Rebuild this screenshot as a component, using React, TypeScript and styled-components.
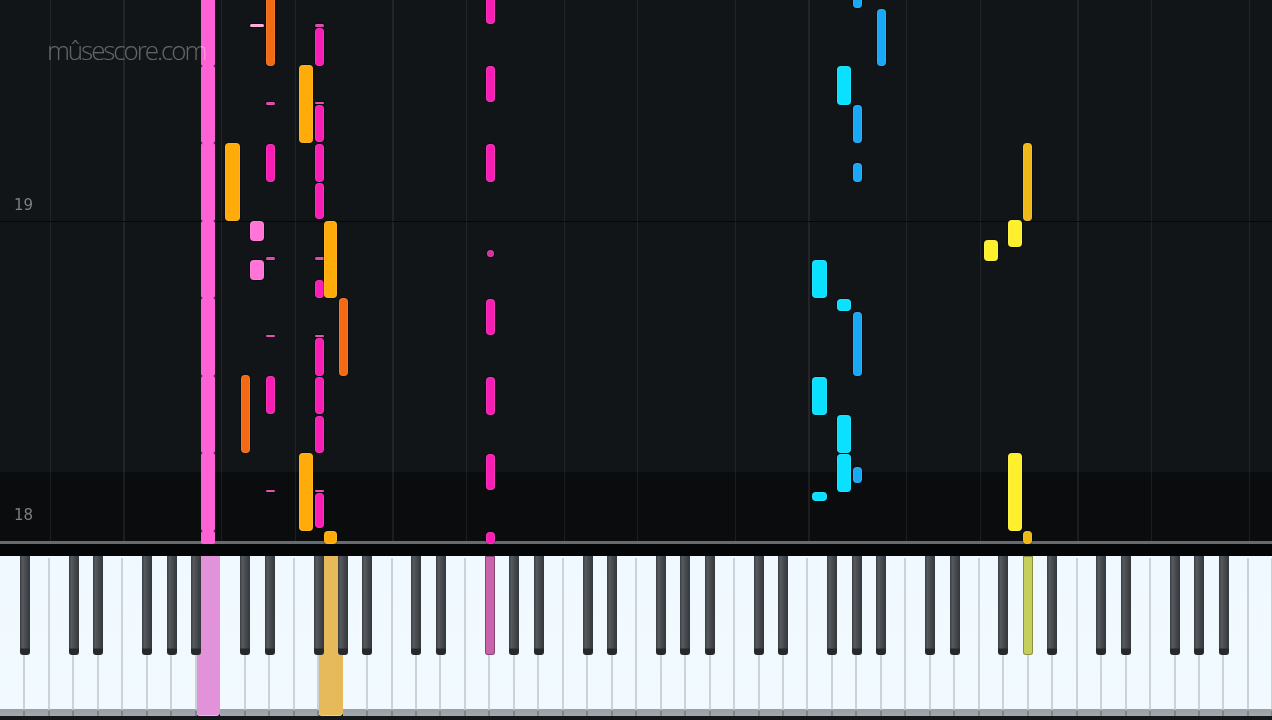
import React from 'react';
import styled, { createGlobalStyle } from 'styled-components';

const KEY_COUNT = 52;
const KEY_WIDTH = 1272 / KEY_COUNT;

const GlobalStyle = createGlobalStyle`
  html, body {
    margin: 0;
    padding: 0;
    background: #050607;
    overflow: hidden;
  }
`;

const Stage = styled.div`
  width: 1272px;
  height: 720px;
  display: flex;
  flex-direction: column;
  background: #050607;
  overflow: hidden;
  filter: blur(0.6px);
`;

// one octave of grid lines, then hit line, bar line, darker lower band
const Roll = styled.div`
  position: relative;
  flex: 0 0 544px;
  overflow: hidden;
  background:
    linear-gradient(#666b71, #666b71) 0 541px / 100% 3px no-repeat,
    linear-gradient(#06080a, #06080a) 0 221px / 100% 1px no-repeat,
    repeating-linear-gradient(
      to right,
      transparent 0,
      transparent 50px,
      rgba(255, 255, 255, 0.07) 50px,
      rgba(255, 255, 255, 0.07) 51.2px,
      transparent 51.2px,
      transparent 123.4px,
      rgba(255, 255, 255, 0.07) 123.4px,
      rgba(255, 255, 255, 0.07) 124.6px,
      transparent 124.6px,
      transparent 171.23px
    ),
    linear-gradient(to bottom, #111518 472px, #0a0c0d 472px);
`;

const Note = styled.div<{ $color: string; $flush?: boolean }>`
  position: absolute;
  box-sizing: border-box;
  border-radius: ${(p) => (p.$flush ? '2px' : '4px')};
  background: ${(p) => p.$color};
  box-shadow: ${(p) =>
    p.$flush ? 'none' : '0 0 0 1px rgba(0, 0, 0, 0.3), inset 0 0 0 1px rgba(255, 255, 255, 0.1)'};
`;

const MeasureNumber = styled.span`
  position: absolute;
  left: 14px;
  font-family: 'DejaVu Sans', sans-serif;
  font-size: 15px;
  line-height: 16px;
  color: #7c7f82;
`;

const Watermark = styled.span`
  position: absolute;
  left: 47px;
  top: 32px;
  font-family: 'Open Sans', sans-serif;
  font-weight: 300;
  font-size: 26px;
  line-height: 36px;
  letter-spacing: -2.1px;
  color: rgba(255, 255, 255, 0.34);
`;

const Gap = styled.div`
  flex: 0 0 12px;
  background: #040506;
`;

const Keyboard = styled.div`
  position: relative;
  flex: 0 0 160px;
  display: flex;
`;

const WhiteKey = styled.div<{ $active?: string }>`
  position: relative;
  flex: 1 1 0;
  box-sizing: border-box;
  background: linear-gradient(
    to bottom,
    ${(p) => p.$active ?? '#f0f9ff'} 0,
    ${(p) => p.$active ?? '#f2faff'} 153px,
    ${(p) => p.$active ?? '#9aa0a5'} 153px,
    ${(p) => p.$active ?? '#a2a8ad'} 160px
  );
  border-radius: ${(p) => (p.$active ? '0 0 4px 4px' : '0')};
  box-shadow: ${(p) => (p.$active ? 'inset 0 -1px 0 rgba(255, 255, 255, 0.35)' : 'none')};

  &::after {
    content: '';
    position: absolute;
    top: 2px;
    bottom: 0;
    right: -1px;
    width: 2px;
    background: ${(p) =>
      p.$active ? 'transparent' : 'linear-gradient(to bottom, #ccd2d6 151px, #7f858a 153px)'};
    z-index: 1;
  }
`;

const BlackKey = styled.div<{ $active?: string }>`
  position: absolute;
  top: 0;
  width: 10px;
  height: 99px;
  z-index: 2;
  box-sizing: border-box;
  border-radius: 0 0 3px 3px;
  background: ${(p) =>
    p.$active
      ? p.$active
      : 'linear-gradient(to bottom, transparent 92px, #26292b 93px), linear-gradient(to right, #3a3d40, #565a5e 25%, #45494d 60%, #34373a)'};
  box-shadow: ${(p) => (p.$active ? 'inset 0 0 0 1px rgba(0, 0, 0, 0.3)' : 'none')};
`;

const Floor = styled.div`
  flex: 0 0 4px;
  background: #15181a;
`;

const PINK = '#ff62d4';
const LIGHT = '#ff74d6';
const MAGENTA = '#f81db5';
const DASH = '#e040a8';
const AMBER = '#ffac0a';
const ORANGE = '#f26a14';
const BLUE = '#18a8f5';
const CYAN = '#0ae0ff';
const YELLOW = '#fff02e';
const GOLD = '#eeb818';

type NoteSpec = [left: number, width: number, top: number, bottom: number, color: string];

const NOTES: NoteSpec[] = [
  // long pink column, one note per beat
  [201, 14, -12, 66, PINK],
  [201, 14, 66, 143, PINK],
  [201, 14, 143, 221, PINK],
  [201, 14, 221, 298, PINK],
  [201, 14, 298, 376, PINK],
  [201, 14, 376, 453, PINK],
  [201, 14, 453, 531, PINK],
  [201, 14, 531, 550, PINK],

  [250, 14, 24, 27, '#ffa8dc'],
  [266, 9, -10, 66, ORANGE],
  [315, 9, 24, 27, DASH],
  [315, 9, 28, 66, MAGENTA],
  [266, 9, 102, 105, DASH],
  [315, 9, 102, 104, DASH],
  [315, 9, 105, 142, MAGENTA],
  [266, 9, 144, 182, MAGENTA],
  [315, 9, 144, 182, MAGENTA],
  [315, 9, 183, 219, MAGENTA],
  [250, 14, 221, 241, LIGHT],
  [250, 14, 260, 280, LIGHT],
  [266, 9, 257, 260, DASH],
  [315, 9, 257, 260, DASH],
  [315, 9, 280, 298, MAGENTA],
  [266, 9, 335, 337, DASH],
  [315, 9, 335, 337, DASH],
  [315, 9, 338, 376, MAGENTA],
  [266, 9, 376, 414, MAGENTA],
  [315, 9, 377, 414, MAGENTA],
  [315, 9, 416, 453, MAGENTA],
  [266, 9, 490, 492, DASH],
  [315, 9, 490, 492, DASH],
  [315, 9, 493, 528, MAGENTA],

  [299, 14, 65, 143, AMBER],
  [225, 15, 143, 221, AMBER],
  [324, 13, 221, 298, AMBER],
  [299, 14, 453, 531, AMBER],
  [324, 13, 531, 550, AMBER],
  [339, 9, 298, 376, ORANGE],
  [241, 9, 375, 453, ORANGE],

  // the repeating centre voice
  [486, 9, -10, 24, MAGENTA],
  [486, 9, 66, 102, MAGENTA],
  [486, 9, 144, 182, MAGENTA],
  [487, 7, 250, 257, '#d6309f'],
  [486, 9, 299, 335, MAGENTA],
  [486, 9, 377, 415, MAGENTA],
  [486, 9, 454, 490, MAGENTA],
  [486, 9, 532, 550, MAGENTA],

  [853, 9, -10, 8, BLUE],
  [877, 9, 9, 66, BLUE],
  [837, 14, 66, 105, CYAN],
  [853, 9, 105, 143, BLUE],
  [853, 9, 163, 182, BLUE],
  [812, 15, 260, 298, CYAN],
  [837, 14, 299, 311, CYAN],
  [853, 9, 312, 376, BLUE],
  [812, 15, 377, 415, CYAN],
  [837, 14, 415, 453, CYAN],
  [837, 14, 454, 492, CYAN],
  [853, 9, 467, 483, BLUE],
  [812, 15, 492, 501, CYAN],

  [1023, 9, 143, 221, GOLD],
  [1008, 14, 220, 247, YELLOW],
  [984, 14, 240, 261, YELLOW],
  [1008, 14, 453, 531, YELLOW],
  [1023, 9, 531, 550, GOLD],
];

const ACTIVE_WHITE: Record<number, string> = { 8: '#e292d8', 13: '#e6ba5a' };
const ACTIVE_BLACK: Record<number, string> = { 20: '#c862aa', 42: '#c6cf5c' };

// seams between B|C and E|F carry no black key
const hasBlackKey = (seam: number) => seam % 7 !== 2 && seam % 7 !== 5;
const seams = Array.from({ length: KEY_COUNT - 1 }, (_, i) => i + 1);

export default function App() {
  return (
    <>
      <GlobalStyle />
      <Stage>
        <Roll>
          <MeasureNumber style={{ top: 197 }}>19</MeasureNumber>
          <MeasureNumber style={{ top: 507 }}>18</MeasureNumber>
          {NOTES.map(([left, width, top, bottom, color], i) => (
            <Note
              key={i}
              $color={color}
              $flush={color === PINK}
              style={{ left, width, top, height: Math.min(bottom, 543.5) - top }}
            />
          ))}
          <Watermark>mûsescore.com</Watermark>
        </Roll>
        <Gap />
        <Keyboard>
          {Array.from({ length: KEY_COUNT }, (_, i) => (
            <WhiteKey key={i} $active={ACTIVE_WHITE[i]} />
          ))}
          {seams.filter(hasBlackKey).map((s) => (
            <BlackKey key={s} $active={ACTIVE_BLACK[s]} style={{ left: s * KEY_WIDTH - 4.5 }} />
          ))}
        </Keyboard>
        <Floor />
      </Stage>
    </>
  );
}
